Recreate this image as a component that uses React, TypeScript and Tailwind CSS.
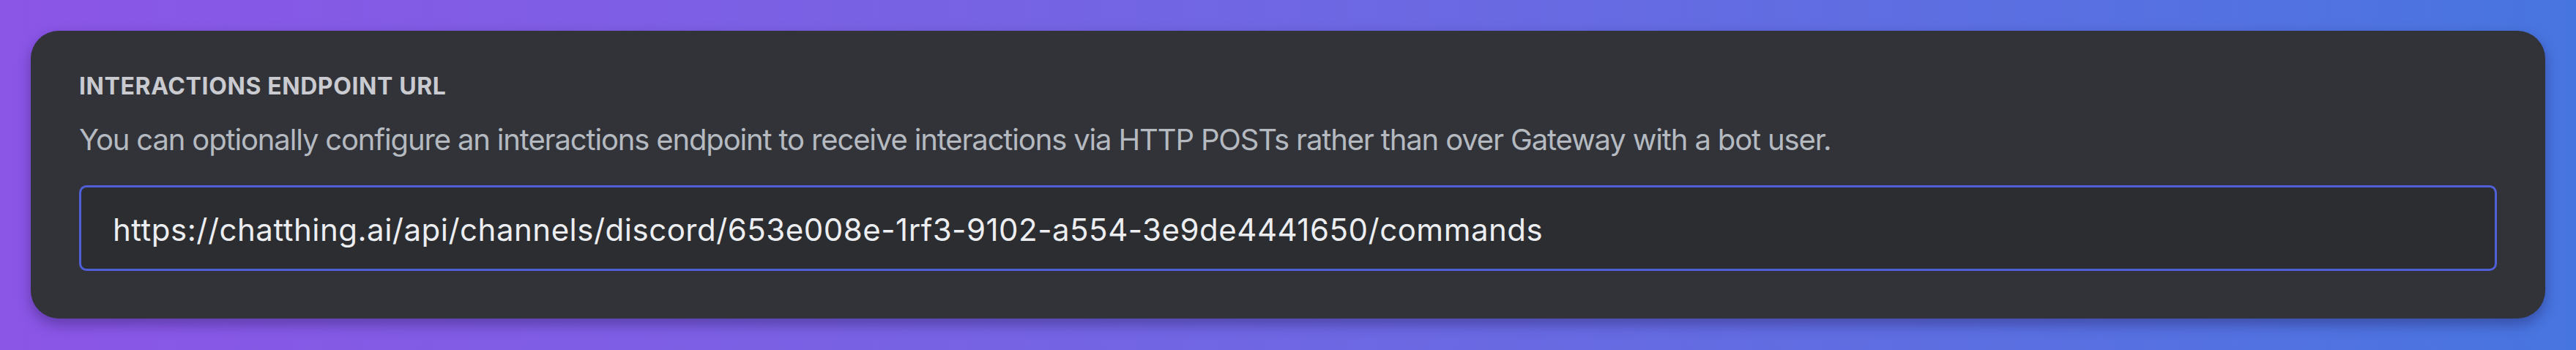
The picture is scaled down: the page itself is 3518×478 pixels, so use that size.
export default function App() {
  return (
    <div
      className="w-full h-[478px] bg-linear-to-r from-[#8b55e6] to-[#4775e0] p-[42px]"
      style={{ fontFamily: "Inter, 'Noto Sans', sans-serif" }}
    >
      <div className="h-[393px] rounded-[38px] bg-[#313338] px-[66px] pt-[56px] shadow-[0_8px_18px_rgba(20,10,60,0.35)]">
        <div className="text-[32px] leading-[40px] font-bold text-[#c9cbd0] tracking-[0.6px]">
          INTERACTIONS ENDPOINT URL
        </div>
        <div className="mt-[29px] text-[40px] leading-[48px] text-[#b5bac1] tracking-[-1.15px]">
          You can optionally configure an interactions endpoint to receive interactions via HTTP POSTs rather than over Gateway with a bot user.
        </div>
        <input
          readOnly
          defaultValue="https://chatthing.ai/api/channels/discord/653e008e-1rf3-9102-a554-3e9de4441650/commands"
          className="mt-[38px] block w-full h-[117px] rounded-[10px] border-[3px] border-[#5060d8] bg-[#2b2d31] pl-[43px] pt-[4px] text-[42px] tracking-[0.5px] text-[#eceef1] outline-none"
          style={{ fontFamily: "Inter, 'Noto Sans', sans-serif" }}
        />
      </div>
    </div>
  );
}
